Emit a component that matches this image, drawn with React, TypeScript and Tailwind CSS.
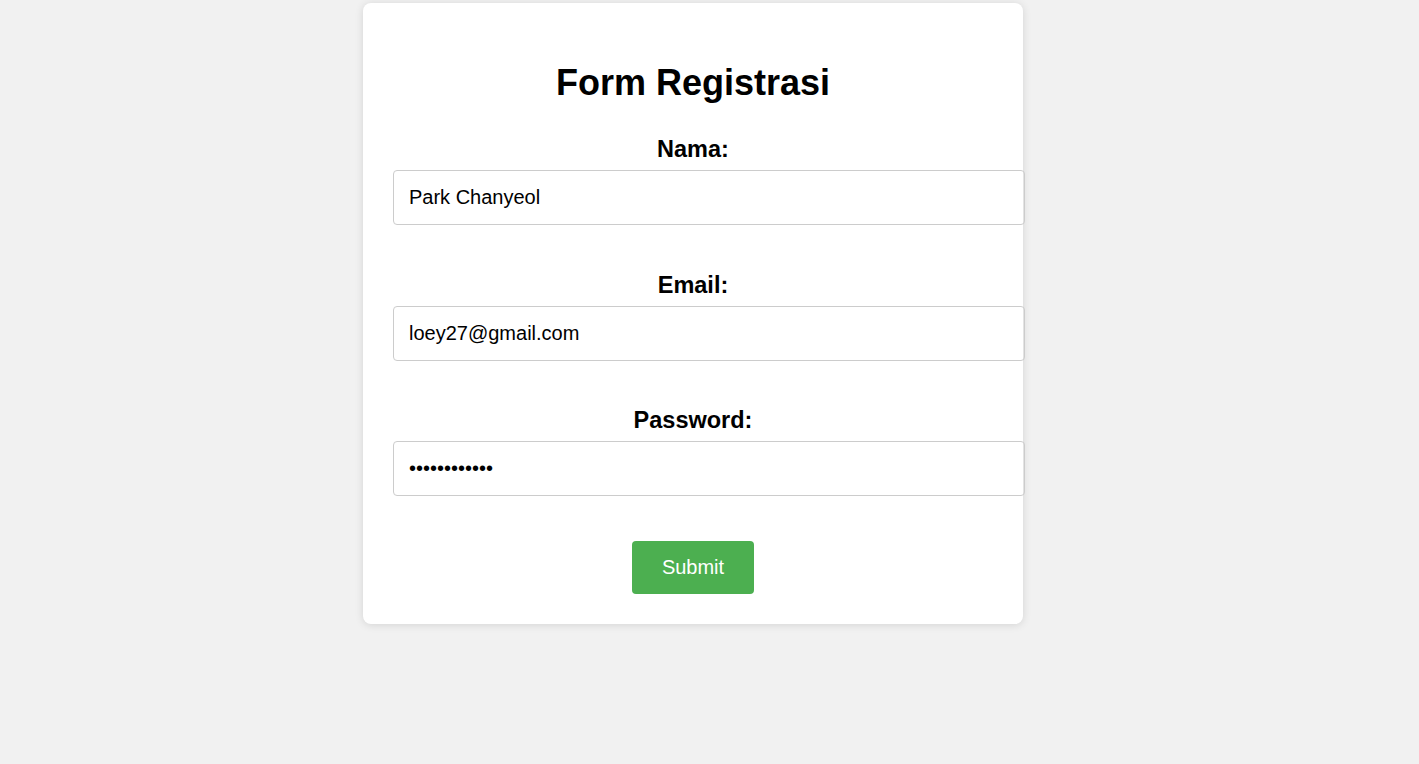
import { useState } from "react";

export default function App() {
  const [nama, setNama] = useState("Park Chanyeol");
  const [email, setEmail] = useState("loey27@gmail.com");
  const [password, setPassword] = useState("chanyeol1127");

  const fields = [
    { id: "nama", label: "Nama:", type: "text", value: nama, set: setNama, gap: "mt-[33px]" },
    { id: "email", label: "Email:", type: "email", value: email, set: setEmail, gap: "mt-[47px]" },
    { id: "password", label: "Password:", type: "password", value: password, set: setPassword, gap: "mt-[46px]" },
  ];

  return (
    <div className="min-h-screen bg-[#f1f1f1] pt-[3px] font-['Liberation_Sans',Arial,sans-serif] text-black">
      <div className="ml-[363px] w-[660px] rounded-lg bg-white px-[30px] pt-[30px] pb-[30px] shadow-[0_1px_8px_rgba(0,0,0,0.12)]">
        <h1 className="mt-[29px] text-center text-[36px] font-bold leading-[1.15]">Form Registrasi</h1>
        <form onSubmit={(e) => e.preventDefault()} className="text-center">
          {fields.map((f) => (
            <div key={f.id} className={f.gap}>
              <label htmlFor={f.id} className="mb-[7px] block text-[23.5px] font-bold leading-[1.15]">
                {f.label}
              </label>
              <input
                id={f.id}
                type={f.type}
                value={f.value}
                onChange={(e) => f.set(e.target.value)}
                className="box-content block w-full rounded border border-[#ccc] px-[15px] py-[15px] text-left text-[20px] leading-[23px] text-black outline-none"
              />
            </div>
          ))}
          <button
            type="submit"
            className="mt-[45px] rounded bg-[#4caf50] px-[30px] py-[15px] text-[20px] leading-[23px] text-white"
          >
            Submit
          </button>
        </form>
      </div>
    </div>
  );
}
